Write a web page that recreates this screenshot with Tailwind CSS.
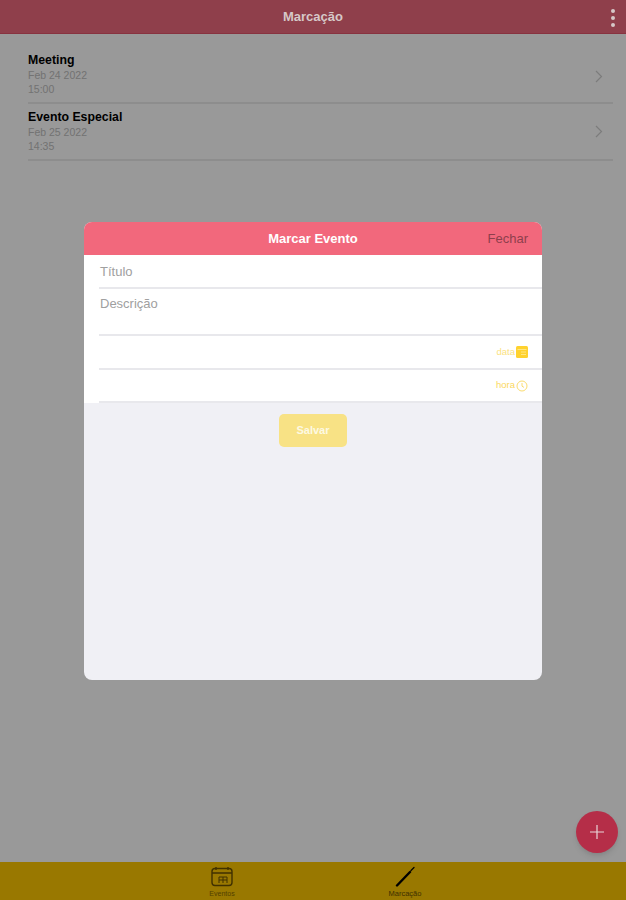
<!DOCTYPE html>
<html lang="pt">
<head>
<meta charset="utf-8">
<title>Marcação</title>
<script src="https://cdn.jsdelivr.net/npm/@tailwindcss/browser@4"></script>
</head>
<body class="m-0">
<div class="relative flex h-[900px] w-[626px] flex-col overflow-hidden bg-white font-['Liberation_Sans',Arial,sans-serif]">
  <header class="relative flex h-[34px] shrink-0 items-center justify-center bg-[#ef6a7e] border-b border-[#e2566c]">
    <span class="relative z-10 text-[13px] font-bold text-[#d6c8c8]">Marcação</span>
    <div class="absolute right-[11px] top-[9px] z-10 flex flex-col gap-[3px]">
      <span class="h-[4px] w-[4px] rounded-full bg-[#d6c8c8]"></span>
      <span class="h-[4px] w-[4px] rounded-full bg-[#d6c8c8]"></span>
      <span class="h-[4px] w-[4px] rounded-full bg-[#d6c8c8]"></span>
    </div>
  </header>

  <main class="flex-1 pl-[28px] pr-[13px] pt-[19px]">
    <div class="flex h-[51px] items-center justify-between border-b-2 border-[#ececec] pr-[10px]">
      <div class="-mt-[6px]">
        <div class="text-[12.3px] font-bold leading-[14px] text-black">Meeting</div>
        <div class="mt-[2px] text-[10.5px] leading-[13px] text-[#c0c0c0]">Feb 24 2022</div>
        <div class="mt-[1px] text-[10.5px] leading-[13px] text-[#c0c0c0]">15:00</div>
      </div>
      <svg width="8" height="13" viewBox="0 0 8 13" fill="none" stroke="#cfcfcf" stroke-width="1.2" class="-mt-[3px]"><path d="M1 1l5.5 5.5L1 12"/></svg>
    </div>
    <div class="flex h-[57px] items-center justify-between border-b-2 border-[#ececec] pr-[10px]">
      <div class="-mt-[1px]">
        <div class="text-[12.3px] font-bold leading-[14px] text-black">Evento Especial</div>
        <div class="mt-[2px] text-[10.5px] leading-[13px] text-[#c0c0c0]">Feb 25 2022</div>
        <div class="mt-[1px] text-[10.5px] leading-[13px] text-[#c0c0c0]">14:35</div>
      </div>
      <svg width="8" height="13" viewBox="0 0 8 13" fill="none" stroke="#cfcfcf" stroke-width="1.2"><path d="M1 1l5.5 5.5L1 12"/></svg>
    </div>
  </main>

  <nav class="flex h-[38px] shrink-0 bg-[#ffc800] pl-[204px]">
    <div class="flex w-[36px] flex-col items-center pt-[4px]">
      <svg width="22" height="21" viewBox="0 0 22 21" fill="none" stroke="#6b5200" stroke-width="1.4">
        <rect x="1" y="2.5" width="20" height="17" rx="3"/>
        <path d="M1 7h20M5 1v3M17 1v3"/>
        <path d="M8 17v-6h8v6M12 11v6M8 14h8" stroke-width="1"/>
      </svg>
      <span class="mt-[2px] text-[7px] leading-[9px] text-[#8a6b00]">Eventos</span>
    </div>
    <div class="ml-[145px] flex w-[40px] flex-col items-center pt-[4px]">
      <svg width="22" height="21" viewBox="0 0 22 21" fill="none" stroke="#000" stroke-linecap="round">
        <path d="M3 19.5L16 6" stroke-width="2.4"/>
        <path d="M17 4.5L20 1.5" stroke-width="1.3"/>
      </svg>
      <span class="mt-[2px] text-[7.5px] leading-[9px] text-[#6b5200]">Marcação</span>
    </div>
  </nav>

  <div class="absolute inset-0 bg-black/40"></div>

  <button class="absolute bottom-[47px] right-[8px] flex h-[42px] w-[42px] items-center justify-center rounded-full bg-[#b52e48] shadow-md">
    <svg width="14" height="14" viewBox="0 0 14 14" stroke="#e8d5d8" stroke-width="1.2"><path d="M7 0v14M0 7h14"/></svg>
  </button>

  <section class="absolute left-[84px] top-[222px] flex h-[458px] w-[458px] flex-col overflow-hidden rounded-[8px] bg-[#f0f0f5]">
    <div class="relative flex h-[33px] shrink-0 items-center justify-center bg-[#f2687c]">
      <span class="text-[13px] font-bold text-white">Marcar Evento</span>
      <span class="absolute right-[14px] top-[9px] text-[13px] leading-[15px] text-[#8e3f4c]">Fechar</span>
    </div>
    <div class="bg-white pl-[15px]">
      <div class="h-[34px] border-b-2 border-[#e8e8ec] pt-[9px] pl-[1px] text-[13px] leading-[15px] text-[#a0a0a0]">Título</div>
      <div class="h-[47px] border-b-2 border-[#e8e8ec] pt-[7px] pl-[1px] text-[13px] leading-[15px] text-[#a0a0a0]">Descrição</div>
      <div class="flex h-[34px] items-center justify-end gap-[1px] border-b-2 border-[#e8e8ec] pr-[14px]">
        <span class="text-[9.5px] text-[#fbe27f]">data</span>
        <svg width="12" height="12" viewBox="0 0 12 12"><rect width="12" height="12" rx="1.5" fill="#ffd22e"/><path d="M1.5 3.5h9M5 6h5M5 8.5h5" stroke="#ffe680" stroke-width="1"/></svg>
      </div>
      <div class="flex h-[33px] items-center justify-end gap-[1px] border-b-2 border-[#e8e8ec] pr-[14px]">
        <span class="text-[9.5px] text-[#fbd860]">hora</span>
        <svg width="12" height="12" viewBox="0 0 12 12" fill="none" stroke="#fbdc70" stroke-width="1"><circle cx="6" cy="6" r="5"/><path d="M6 3v3.2l2 1.2"/></svg>
      </div>
    </div>
    <button class="mx-auto mt-[11px] h-[33px] w-[68px] rounded-[5px] bg-[#f8e285] text-[11px] font-bold text-[#fdf9e2]">Salvar</button>
  </section>
</div>
</body>
</html>
